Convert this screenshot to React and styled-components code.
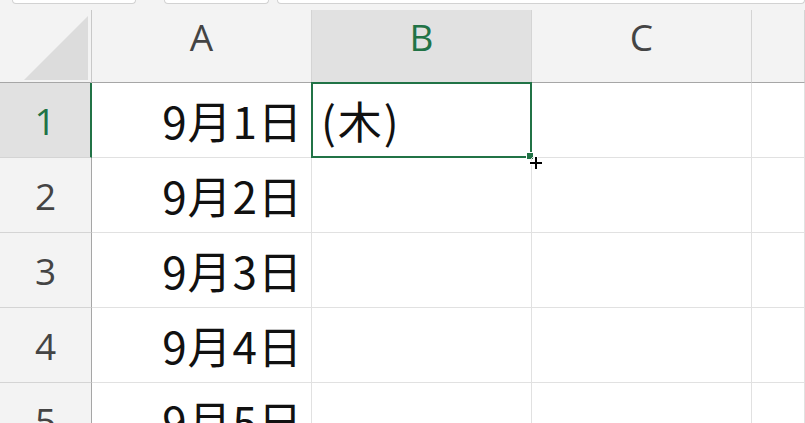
import React from "react";
import styled, { createGlobalStyle } from "styled-components";

const GlobalStyle = createGlobalStyle`
  html, body {
    margin: 0;
    padding: 0;
    background: #ffffff;
    overflow: hidden;
  }
  #root {
    width: 805px;
    height: 423px;
    overflow: hidden;
  }
`;

const GREEN = "#217346";
const GRID = "#e1e1e1";

const S = {
  Page: styled.div`
    width: 805px;
    height: 423px;
    display: flex;
    flex-direction: column;
    background: #f3f3f3;
    overflow: hidden;
  `,
  Strip: styled.div`
    height: 10px;
    flex: 0 0 10px;
    display: flex;
    align-items: flex-start;
    background: #f3f3f3;
  `,
  Field: styled.div`
    height: 3px;
    width: ${(props) => props.w};
    margin-left: ${(props) => props.ml};
    flex: ${(props) => (props.grow ? "1 1 auto" : "0 0 auto")};
    background: #ffffff;
    border: 1px solid #d2d2d2;
    border-top: none;
    border-radius: 0 0 4px 4px;
  `,
  Sheet: styled.div`
    flex: 1 1 auto;
    display: grid;
    grid-template-columns: 92px 220px 220px 220px 1fr;
    grid-template-rows: 73px repeat(5, 75px);
    background: #ffffff;
    position: relative;
  `,
  Corner: styled.div`
    background: #f3f3f3;
    border-right: 1px solid #c8c8c8;
    border-bottom: 1px solid #a6a6a6;
    position: relative;
    svg {
      position: absolute;
      right: 3px;
      bottom: 2px;
    }
  `,
  ColHead: styled.div`
    display: flex;
    justify-content: center;
    align-items: center;
    padding-bottom: 19px;
    background: ${(props) => (props.active ? "#e1e1e1" : "#f3f3f3")};
    color: ${(props) => (props.active ? GREEN : "#444444")};
    border-right: 1px solid #d4d4d4;
    border-bottom: 1px solid #a6a6a6;
    font-family: "Open Sans", "Liberation Sans", sans-serif;
    font-size: 37px;
    line-height: 1;
  `,
  RowHead: styled.div`
    display: flex;
    justify-content: center;
    align-items: center;
    background: ${(props) => (props.active ? "#e1e1e1" : "#f3f3f3")};
    color: ${(props) => (props.active ? GREEN : "#444444")};
    border-right: ${(props) =>
      props.active ? `2px solid ${GREEN}` : "1px solid #a6a6a6"};
    border-bottom: 1px solid #d4d4d4;
    font-family: "Open Sans", "Liberation Sans", sans-serif;
    font-size: 37px;
    line-height: 1;
  `,
  Cell: styled.div`
    display: flex;
    align-items: center;
    justify-content: ${(props) => (props.right ? "flex-end" : "flex-start")};
    padding: 0 ${(props) => (props.right ? "8px" : "0")} 0
      ${(props) => (props.right ? "0" : "9px")};
    border-right: 1px solid ${GRID};
    border-bottom: 1px solid ${GRID};
    font-family: "Noto Sans CJK JP", "Noto Sans", sans-serif;
    font-size: 44px;
    letter-spacing: ${(props) => (props.right ? "1px" : "2px")};
    line-height: 1;
    color: #111111;
    white-space: nowrap;
    position: relative;
    box-sizing: border-box;
  `,
  Selection: styled.div`
    position: absolute;
    left: -1px;
    top: -1px;
    right: -1px;
    bottom: -1px;
    border: 2px solid ${GREEN};
    pointer-events: none;
  `,
  Handle: styled.div`
    position: absolute;
    right: -4px;
    bottom: -4px;
    width: 6px;
    height: 6px;
    background: ${GREEN};
    border: 1px solid #ffffff;
  `,
  Cursor: styled.svg`
    position: absolute;
    left: 529px;
    top: 146px;
    z-index: 3;
  `,
};

const DATES = ["9月1日", "9月2日", "9月3日", "9月4日", "9月5日"];
const COLS = ["A", "B", "C", ""];

function App() {
  return (
    <>
      <GlobalStyle />
      <S.Page>
        <S.Strip>
          <S.Field w="122px" ml="12px" />
          <S.Field w="103px" ml="28px" />
          <S.Field grow ml="8px" />
        </S.Strip>
        <S.Sheet>
          <S.Corner>
            <svg width="64" height="64" viewBox="0 0 64 64">
              <polygon points="64,0 64,64 0,64" fill="#dcdcdc" />
            </svg>
          </S.Corner>
          {COLS.map((c) => (
            <S.ColHead key={c || "d"} active={c === "B"}>
              {c}
            </S.ColHead>
          ))}
          {DATES.map((d, i) => (
            <React.Fragment key={d}>
              <S.RowHead active={i === 0}>{i + 1}</S.RowHead>
              <S.Cell right>{d}</S.Cell>
              <S.Cell>
                {i === 0 && "(木)"}
                {i === 0 && (
                  <S.Selection>
                    <S.Handle />
                  </S.Selection>
                )}
              </S.Cell>
              <S.Cell />
              <S.Cell />
            </React.Fragment>
          ))}
          <S.Cursor width="14" height="14" viewBox="0 0 14 14">
            <path d="M7 1v12M1 7h12" stroke="#fff" strokeWidth="4" />
            <path d="M7 1v12M1 7h12" stroke="#000" strokeWidth="2" />
          </S.Cursor>
        </S.Sheet>
      </S.Page>
    </>
  );
}

export default App;
